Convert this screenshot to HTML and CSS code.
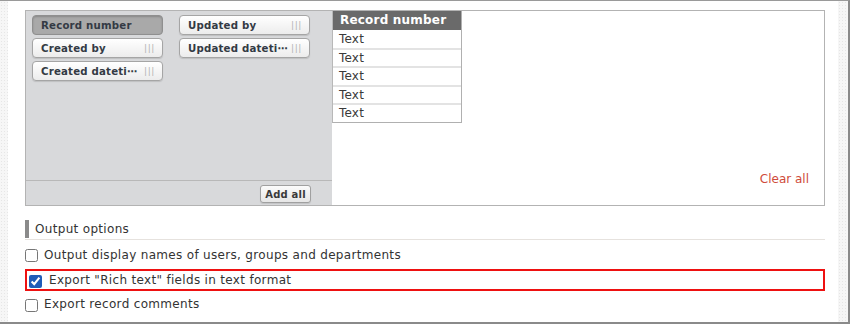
FILE: index.html
```html
<!DOCTYPE html>
<html>
<head>
<meta charset="utf-8">
<link rel="stylesheet" href="styles.css">
</head>
<body>
<div class="frame">
  <div class="strip"></div>
  <div class="page">
    <div class="picker">
      <div class="pool">
        <div class="chips">
          <div class="col">
            <div class="chip chip-selected"><span class="chip-label">Record number</span></div>
            <div class="chip"><span class="chip-label">Created by</span><span class="grip">|||</span></div>
            <div class="chip"><span class="chip-label">Created dateti⋯</span><span class="grip">|||</span></div>
          </div>
          <div class="col">
            <div class="chip"><span class="chip-label">Updated by</span><span class="grip">|||</span></div>
            <div class="chip"><span class="chip-label">Updated dateti⋯</span><span class="grip">|||</span></div>
          </div>
        </div>
        <div class="poolbar"><button class="btn">Add all</button></div>
      </div>
      <div class="selected">
        <div class="grid">
          <div class="grid-head">Record number</div>
          <div class="grid-row">Text</div>
          <div class="grid-row">Text</div>
          <div class="grid-row">Text</div>
          <div class="grid-row">Text</div>
          <div class="grid-row">Text</div>
        </div>
        <a class="clear">Clear all</a>
      </div>
    </div>
    <div class="options">
      <div class="opt-title"><div class="opt-title-inner">Output options</div></div>
      <label class="opt"><input type="checkbox" class="cb"><span>Output display names of users, groups and departments</span></label>
      <label class="opt opt-hl"><input type="checkbox" class="cb" checked><span>Export "Rich text" fields in text format</span></label>
      <label class="opt opt-last"><input type="checkbox" class="cb"><span>Export record comments</span></label>
    </div>
  </div>
  <div class="strip strip-right"></div>
</div>
</body>
</html>
```
FILE: styles.css
```css
html, body {
  margin: 0;
  padding: 0;
  background: #ffffff;
}
body {
  font-family: "DejaVu Sans", Verdana, sans-serif;
  color: #333333;
}
.frame {
  width: 850px;
  height: 324px;
  box-sizing: border-box;
  border-top: 1px solid #9a9a9a;
  border-right: 2px solid #8a8a8a;
  border-bottom: 2px solid #8a8a8a;
  display: flex;
  overflow: hidden;
}
.strip {
  width: 8px;
  flex: none;
  background-color: #f6f6f6;
  background-image: radial-gradient(#e6e6e6 0.8px, transparent 0.9px);
  background-size: 3px 3px;
}
.strip-right {
  width: 10px;
}
.page {
  flex: 1;
  padding: 9px 13px 0 17px;
}
.picker {
  height: 196px;
  box-sizing: border-box;
  border: 1px solid #b3b3b3;
  display: flex;
}
.pool {
  width: 306px;
  flex: none;
  background: #d8d9db;
  display: flex;
  flex-direction: column;
}
.chips {
  flex: 1;
  display: flex;
  gap: 16px;
  padding: 4px 0 0 6px;
}
.col {
  display: flex;
  flex-direction: column;
  gap: 3px;
}
.chip {
  width: 131px;
  height: 20px;
  box-sizing: border-box;
  border: 1px solid #a5a5a5;
  border-radius: 4px;
  background: linear-gradient(#ffffff, #ececec);
  display: flex;
  align-items: center;
  padding: 0 7px 0 8px;
  font-size: 10.2px;
  font-weight: bold;
  color: #333a44;
  box-shadow: 0 1px 1px rgba(0,0,0,0.12);
}
.chip-selected {
  background: #a9a9a9;
  border-color: #8f8f8f;
  box-shadow: inset 0 1px 2px rgba(0,0,0,0.2);
}
.chip-label {
  flex: 1;
  white-space: nowrap;
  letter-spacing: 0.2px;
}
.grip {
  color: #b3b3b3;
  font-weight: normal;
  font-size: 9px;
  letter-spacing: 0.6px;
}
.poolbar {
  height: 25px;
  box-sizing: border-box;
  border-top: 1px solid #b8b8b8;
  display: flex;
  align-items: center;
  justify-content: flex-end;
  padding-right: 21px;
}
.btn {
  width: 51px;
  height: 18px;
  box-sizing: border-box;
  border: 1px solid #a0a0a0;
  border-radius: 3px;
  background: linear-gradient(#fbfbfb, #e6e6e6);
  font-family: "DejaVu Sans", Verdana, sans-serif;
  font-size: 10px;
  font-weight: bold;
  color: #3a3a3a;
  padding: 0;
  margin-top: 2px;
  letter-spacing: 0.2px;
  box-shadow: 0 1px 1px rgba(0,0,0,0.1);
}
.selected {
  flex: 1;
  background: #ffffff;
  display: flex;
  flex-direction: column;
}
.grid {
  width: 128px;
  border: 1px solid #b0b0b0;
  border-top: none;
  border-left-color: #b8b8b8;
}
.grid-head {
  height: 19px;
  background: #6a6a6a;
  color: #ffffff;
  font-weight: bold;
  font-size: 12px;
  line-height: 19px;
  padding-left: 7px;
  letter-spacing: 0.2px;
}
.grid-row {
  height: 18.5px;
  box-sizing: border-box;
  border-top: 2px solid #e3e3e3;
  font-size: 12px;
  line-height: 16px;
  padding-left: 6px;
  color: #3a3a3a;
  letter-spacing: 0.2px;
}
.grid-head + .grid-row {
  border-top: none;
  height: 17.5px;
  line-height: 18px;
}
.clear {
  margin-top: auto;
  align-self: flex-end;
  padding: 0 15px 19px 0;
  font-size: 12px;
  color: #cf4b3b;
  cursor: pointer;
}
.options {
  margin-top: 14px;
  letter-spacing: 0.32px;
}
.opt-title {
  border-bottom: 1px solid #e6e2de;
  padding-bottom: 1px;
}
.opt-title-inner {
  border-left: 4px solid #8a8a8a;
  padding-left: 6px;
  height: 18px;
  line-height: 18px;
  font-size: 12px;
  color: #333333;
}
.opt {
  display: flex;
  align-items: center;
  height: 20px;
  margin-top: 4.5px;
  font-size: 12px;
  color: #333333;
}
.opt span {
  margin-left: 6px;
}
.cb {
  width: 13px;
  height: 13px;
  margin: 2px 0 0 0;
  accent-color: #1f5cb8;
}
.opt-hl {
  height: 22px;
  box-sizing: border-box;
  border: 2px solid #ee1111;
  padding-left: 2px;
}
.opt-hl span {
  margin-left: 7px;
}
.opt-last {
  margin-top: 3px;
}
```
